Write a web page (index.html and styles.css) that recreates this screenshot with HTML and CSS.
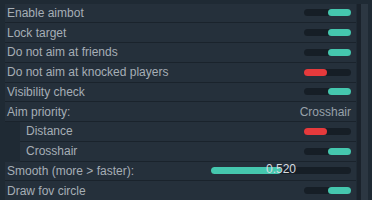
FILE: index.html
```
<!DOCTYPE html>
<html>
<head>
    <meta charset="UTF-8">
    <title>Aimbot</title>
    <link rel="stylesheet" href="styles.css">
</head>
<body>
    <div class="panel">
        <div class="list">
            <div class="row"><span>Enable aimbot</span><span class="toggle on"></span></div>
            <div class="row"><span>Lock target</span><span class="toggle on"></span></div>
            <div class="row"><span>Do not aim at friends</span><span class="toggle on"></span></div>
            <div class="row"><span>Do not aim at knocked players</span><span class="toggle off"></span></div>
            <div class="row"><span>Visibility check</span><span class="toggle on"></span></div>
            <div class="row"><span>Aim priority:</span><span class="value">Crosshair</span></div>
            <div class="row sub"><span>Distance</span><span class="toggle off"></span></div>
            <div class="row sub"><span>Crosshair</span><span class="toggle on"></span></div>
            <div class="row">
                <span>Smooth (more &gt; faster):</span>
                <span class="slider"><span class="fill" style="width: 50%"></span><span class="num">0.520</span></span>
            </div>
            <div class="row"><span>Draw fov circle</span><span class="toggle on"></span></div>
        </div>
        <div class="scrollbar"><div class="thumb"></div></div>
    </div>
</body>
</html>
```

FILE: styles.css
```
body {
    margin: 0;
    background: #1f2a34;
    font-family: "Liberation Sans", Arial, sans-serif;
    font-size: 12px;
    color: #a6aeb6;
}

.panel {
    display: flex;
    height: 200px;
    overflow: hidden;
}

.list {
    flex: 1;
    padding: 3.5px 0 0 5px;
}

.row {
    display: flex;
    align-items: center;
    justify-content: space-between;
    height: 18.75px;
    padding: 0 5px 0 2px;
    background: #25303b;
    border-bottom: 1px solid #1a232c;
}

.row.sub {
    margin-left: 15px;
    padding-left: 6px;
}

.value {
    color: #98a1aa;
}

.toggle {
    position: relative;
    width: 47px;
    height: 7px;
    border-radius: 4px;
    background: #161e26;
}

.toggle::after {
    content: "";
    position: absolute;
    top: 0;
    width: 23px;
    height: 7px;
    border-radius: 4px;
}

.toggle.on::after {
    right: 0;
    background: #45c7ae;
}

.toggle.off::after {
    left: 0;
    background: #e63a3c;
}

.slider {
    position: relative;
    width: 140px;
    height: 7px;
    border-radius: 4px;
    background: #161e26;
}

.fill {
    position: absolute;
    left: 0;
    top: 0;
    height: 7px;
    border-radius: 4px;
    background: #45c7ae;
}

.num {
    position: absolute;
    left: 0;
    right: 0;
    top: -5px;
    text-align: center;
    color: #d6dbe0;
}

.scrollbar {
    width: 11px;
    margin: 4px 4px 0 1px;
    background: #1a222b;
    display: flex;
    justify-content: flex-end;
}

.thumb {
    width: 7px;
    background: #2c3742;
}
```
